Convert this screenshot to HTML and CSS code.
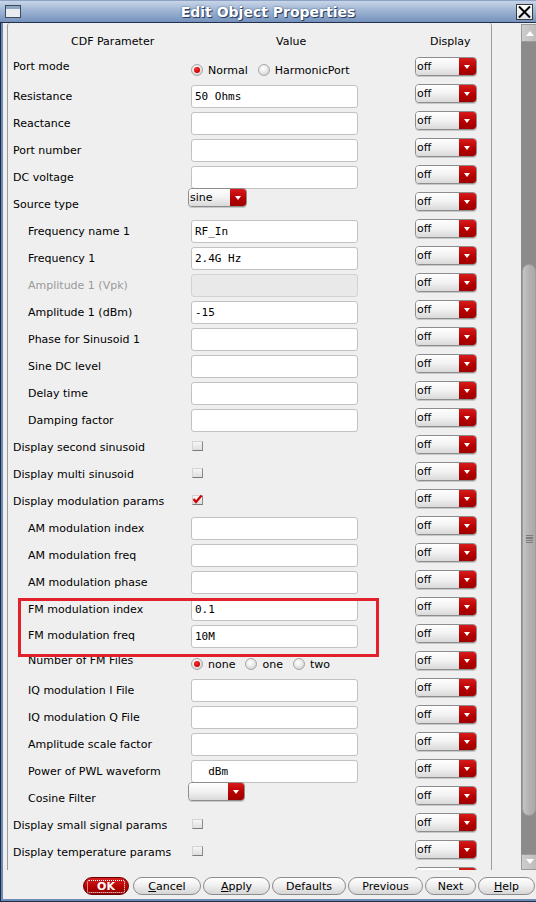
FILE: index.html
```html
<!DOCTYPE html>
<html>
<head>
<meta charset="utf-8">
<link rel="stylesheet" href="styles.css">
</head>
<body>
<div class="window">
  <div class="titlebar">
    <div class="tb-left">
      <svg class="wicon" width="16" height="13" viewBox="0 0 16 13"><rect x="0.5" y="0.5" width="15" height="12" fill="#e9ecef" stroke="#3c4a5e"/><rect x="1" y="1" width="14" height="3" fill="#8ea6c6"/></svg>
    </div>
    <div class="title">Edit Object Properties</div>
    <div class="tb-right">
      <div class="close"><svg width="15" height="14" viewBox="0 0 15 14"><path d="M2 1.5 L13 12.5 M13 1.5 L2 12.5" stroke="#000" stroke-width="2"/></svg></div>
    </div>
  </div>
  <div class="outer">
    <div class="client">
      <div class="panel">
        <div class="frame">
          <div class="header">
            <div class="h1">CDF Parameter</div>
            <div class="h2">Value</div>
            <div class="h3">Display</div>
          </div>

          <div class="row">
            <div class="lbl top">Port mode</div>
            <div class="val"><div class="radios"><span class="radio on"></span><span class="rtext">Normal</span><span class="radio"></span><span class="rtext">HarmonicPort</span></div></div>
            <div class="disp"><div class="dd"><span class="dd-t">off</span><span class="dd-b"></span></div></div>
          </div>
          <div class="row">
            <div class="lbl">Resistance</div>
            <div class="val"><div class="field">50 Ohms</div></div>
            <div class="disp"><div class="dd"><span class="dd-t">off</span><span class="dd-b"></span></div></div>
          </div>
          <div class="row">
            <div class="lbl">Reactance</div>
            <div class="val"><div class="field"></div></div>
            <div class="disp"><div class="dd"><span class="dd-t">off</span><span class="dd-b"></span></div></div>
          </div>
          <div class="row">
            <div class="lbl">Port number</div>
            <div class="val"><div class="field"></div></div>
            <div class="disp"><div class="dd"><span class="dd-t">off</span><span class="dd-b"></span></div></div>
          </div>
          <div class="row">
            <div class="lbl">DC voltage</div>
            <div class="val"><div class="field"></div></div>
            <div class="disp"><div class="dd"><span class="dd-t">off</span><span class="dd-b"></span></div></div>
          </div>
          <div class="row">
            <div class="lbl">Source type</div>
            <div class="val"><div class="dd sel sine"><span class="dd-t">sine</span><span class="dd-b"></span></div></div>
            <div class="disp"><div class="dd"><span class="dd-t">off</span><span class="dd-b"></span></div></div>
          </div>
          <div class="row">
            <div class="lbl ind">Frequency name 1</div>
            <div class="val"><div class="field">RF_In</div></div>
            <div class="disp"><div class="dd"><span class="dd-t">off</span><span class="dd-b"></span></div></div>
          </div>
          <div class="row">
            <div class="lbl ind">Frequency 1</div>
            <div class="val"><div class="field">2.4G Hz</div></div>
            <div class="disp"><div class="dd"><span class="dd-t">off</span><span class="dd-b"></span></div></div>
          </div>
          <div class="row">
            <div class="lbl ind dis">Amplitude 1 (Vpk)</div>
            <div class="val"><div class="field disabled"></div></div>
            <div class="disp"><div class="dd"><span class="dd-t">off</span><span class="dd-b"></span></div></div>
          </div>
          <div class="row">
            <div class="lbl ind">Amplitude 1 (dBm)</div>
            <div class="val"><div class="field">-15</div></div>
            <div class="disp"><div class="dd"><span class="dd-t">off</span><span class="dd-b"></span></div></div>
          </div>
          <div class="row">
            <div class="lbl ind">Phase for Sinusoid 1</div>
            <div class="val"><div class="field"></div></div>
            <div class="disp"><div class="dd"><span class="dd-t">off</span><span class="dd-b"></span></div></div>
          </div>
          <div class="row">
            <div class="lbl ind">Sine DC level</div>
            <div class="val"><div class="field"></div></div>
            <div class="disp"><div class="dd"><span class="dd-t">off</span><span class="dd-b"></span></div></div>
          </div>
          <div class="row">
            <div class="lbl ind">Delay time</div>
            <div class="val"><div class="field"></div></div>
            <div class="disp"><div class="dd"><span class="dd-t">off</span><span class="dd-b"></span></div></div>
          </div>
          <div class="row">
            <div class="lbl ind">Damping factor</div>
            <div class="val"><div class="field"></div></div>
            <div class="disp"><div class="dd"><span class="dd-t">off</span><span class="dd-b"></span></div></div>
          </div>
          <div class="row">
            <div class="lbl">Display second sinusoid</div>
            <div class="val"><span class="check"></span></div>
            <div class="disp"><div class="dd"><span class="dd-t">off</span><span class="dd-b"></span></div></div>
          </div>
          <div class="row">
            <div class="lbl">Display multi sinusoid</div>
            <div class="val"><span class="check"></span></div>
            <div class="disp"><div class="dd"><span class="dd-t">off</span><span class="dd-b"></span></div></div>
          </div>
          <div class="row">
            <div class="lbl">Display modulation params</div>
            <div class="val"><span class="check"><svg width="11" height="10" viewBox="0 0 11 10"><path d="M1.5 5 L4 8 L9.5 1.5" stroke="#d10000" stroke-width="2.2" fill="none"/></svg></span></div>
            <div class="disp"><div class="dd"><span class="dd-t">off</span><span class="dd-b"></span></div></div>
          </div>
          <div class="row">
            <div class="lbl ind">AM modulation index</div>
            <div class="val"><div class="field"></div></div>
            <div class="disp"><div class="dd"><span class="dd-t">off</span><span class="dd-b"></span></div></div>
          </div>
          <div class="row">
            <div class="lbl ind">AM modulation freq</div>
            <div class="val"><div class="field"></div></div>
            <div class="disp"><div class="dd"><span class="dd-t">off</span><span class="dd-b"></span></div></div>
          </div>
          <div class="row">
            <div class="lbl ind">AM modulation phase</div>
            <div class="val"><div class="field"></div></div>
            <div class="disp"><div class="dd"><span class="dd-t">off</span><span class="dd-b"></span></div></div>
          </div>
          <div class="hl">
            <div class="row">
              <div class="lbl ind">FM modulation index</div>
              <div class="val"><div class="field">0.1</div></div>
              <div class="disp"><div class="dd"><span class="dd-t">off</span><span class="dd-b"></span></div></div>
            </div>
            <div class="row">
              <div class="lbl ind up1">FM modulation freq</div>
              <div class="val"><div class="field">10M</div></div>
              <div class="disp"><div class="dd"><span class="dd-t">off</span><span class="dd-b"></span></div></div>
            </div>
          </div>
          <div class="row">
            <div class="lbl ind up3">Number of FM Files</div>
            <div class="val"><div class="radios"><span class="radio on"></span><span class="rtext">none</span><span class="radio"></span><span class="rtext">one</span><span class="radio"></span><span class="rtext">two</span></div></div>
            <div class="disp"><div class="dd"><span class="dd-t">off</span><span class="dd-b"></span></div></div>
          </div>
          <div class="row">
            <div class="lbl ind">IQ modulation I File</div>
            <div class="val"><div class="field"></div></div>
            <div class="disp"><div class="dd"><span class="dd-t">off</span><span class="dd-b"></span></div></div>
          </div>
          <div class="row">
            <div class="lbl ind">IQ modulation Q File</div>
            <div class="val"><div class="field"></div></div>
            <div class="disp"><div class="dd"><span class="dd-t">off</span><span class="dd-b"></span></div></div>
          </div>
          <div class="row">
            <div class="lbl ind">Amplitude scale factor</div>
            <div class="val"><div class="field"></div></div>
            <div class="disp"><div class="dd"><span class="dd-t">off</span><span class="dd-b"></span></div></div>
          </div>
          <div class="row">
            <div class="lbl ind">Power of PWL waveform</div>
            <div class="val"><div class="field">  dBm</div></div>
            <div class="disp"><div class="dd"><span class="dd-t">off</span><span class="dd-b"></span></div></div>
          </div>
          <div class="row">
            <div class="lbl ind">Cosine Filter</div>
            <div class="val"><div class="dd sel cosine"><span class="dd-t"></span><span class="dd-b"></span></div></div>
            <div class="disp"><div class="dd"><span class="dd-t">off</span><span class="dd-b"></span></div></div>
          </div>
          <div class="row">
            <div class="lbl">Display small signal params</div>
            <div class="val"><span class="check"></span></div>
            <div class="disp"><div class="dd"><span class="dd-t">off</span><span class="dd-b"></span></div></div>
          </div>
          <div class="row">
            <div class="lbl">Display temperature params</div>
            <div class="val"><span class="check"></span></div>
            <div class="disp"><div class="dd"><span class="dd-t">off</span><span class="dd-b"></span></div></div>
          </div>
          <div class="row">
            <div class="lbl"></div>
            <div class="val"></div>
            <div class="disp"><div class="dd"><span class="dd-t"></span><span class="dd-b"></span></div></div>
          </div>
        </div>
        <div class="sb">
          <div class="sb-btn up"></div>
          <div class="sb-track"><div class="thumb"><span class="grip"></span></div></div>
          <div class="sb-btn down"></div>
        </div>
      </div>
      <div class="buttons">
        <div class="btn ok"><span class="focus">OK</span></div>
        <div class="btn cancel"><u>C</u>ancel</div>
        <div class="btn apply"><u>A</u>pply</div>
        <div class="btn defaults">Defaults</div>
        <div class="btn previous">Previous</div>
        <div class="btn next">Next</div>
        <div class="btn help"><u>H</u>elp</div>
      </div>
    </div>
  </div>
</div>
</body>
</html>
```

FILE: styles.css
```css
* { box-sizing: border-box; }
html, body { margin: 0; padding: 0; }
body {
  width: 536px; height: 902px; overflow: hidden;
  font-family: "DejaVu Sans", "Noto Sans", sans-serif;
  font-size: 11px; color: #000;
  background: #efefef;
}
.window { width: 536px; height: 902px; display: flex; flex-direction: column; }

/* title bar */
.titlebar {
  height: 23px; flex: none;
  display: grid; grid-template-columns: 1fr auto 1fr; align-items: center;
  background: linear-gradient(#c8d5e8 0%, #9fb5d4 45%, #7592bd 100%);
  border-top: 1px solid #8ba2c4;
  border-bottom: 1px solid #22314c;
}
.tb-left { padding-left: 5px; display: flex; align-items: center; }
.wicon { display: block; }
.title {
  font-weight: bold; font-size: 14px; color: #fff; line-height: 20px;
  text-shadow: 1px 1px 0 #2c3e5c, 0 0 2px #3b4f70;
}
.tb-right { display: flex; justify-content: flex-end; padding-right: 3px; }
.close {
  width: 17px; height: 16px; border: 1px solid #3a3a3a;
  background: linear-gradient(#ffffff, #dfe5ee);
  display: flex; align-items: center; justify-content: center;
}
.close svg { display: block; }

/* window border */
.outer {
  flex: 1; display: flex;
  border-left: 1px solid #1f2c44; border-right: 1px solid #1f2c44; border-bottom: 1px solid #1f2c44;
}
.client {
  flex: 1; display: flex; flex-direction: column;
  border-left: 2px solid #6b8ab6; border-right: 2px solid #6b8ab6; border-bottom: 2px solid #6b8ab6;
  background: #efefef;
}
.panel { height: 847px; display: flex; flex: none; }
.frame {
  margin-left: 4px; width: 485px; height: 847px; overflow: hidden;
  border-left: 1px solid #9c9c9c; border-right: 1px solid #9c9c9c;
  border-top-left-radius: 3px; border-top-right-radius: 3px;
}

/* header */
.header { display: grid; grid-template-columns: 180px 227px 1fr; height: 30px; line-height: 14px; padding-top: 12px; }
.h1 { padding-left: 63px; }
.h2 { padding-left: 88px; }
.h3 { padding-left: 15px; }

/* rows */
.row { display: grid; grid-template-columns: 180px 227px 1fr; height: 27px; }
.lbl { padding-left: 5px; padding-top: 10px; line-height: 13px; white-space: nowrap; }
.lbl.top { padding-top: 7px; }
.lbl.ind { padding-left: 20px; }
.lbl.dis { color: #9a9a9a; }
.lbl.up1 { padding-top: 9px; }
.lbl.up3 { padding-top: 7px; }
.val { position: relative; }

.field {
  margin: 5px 0 0 3px; width: 167px; height: 23px;
  border: 1px solid #c2c2c2; border-radius: 3px; background: #fff;
  font-family: "DejaVu Sans Mono", monospace; font-size: 11px;
  line-height: 21px; padding-left: 3px; white-space: pre;
}
.field.disabled { background: #e9e9e9; border-color: #d2d2d2; }

/* dropdowns */
.dd {
  margin-top: 4px; width: 62px; height: 19px; display: flex;
  border: 1px solid #8d8d8d; border-radius: 4px; overflow: hidden;
  box-shadow: 0 1px 0 #c8c8c8;
}
.dd-t {
  flex: 1; background: linear-gradient(#ffffff 0%, #f2f2f2 50%, #d9d9d9 100%);
  line-height: 17px; padding-left: 1px;
}
.dd-b {
  width: 17px; position: relative;
  background: linear-gradient(#d81a1a, #b30000 60%, #a00000);
}
.dd-b::after {
  content: ""; position: absolute; left: 5px; top: 7px;
  border-left: 3.5px solid transparent; border-right: 3.5px solid transparent;
  border-top: 4px solid #fff;
}
.dd.sel { margin-top: 0; }
.dd.sine { width: 59px; }
.dd.sine .dd-b { width: 16px; }
.dd.sine .dd-b::after { left: 4.5px; }
.dd.cosine { width: 57px; }
.dd.cosine .dd-b { width: 16px; }
.dd.cosine .dd-b::after { left: 4.5px; }

/* radios */
.radios { display: flex; align-items: center; margin-top: 10px; margin-left: 3px; height: 13px; }
.radio {
  width: 12px; height: 12px; border-radius: 50%; flex: none;
  background: radial-gradient(circle at 40% 35%, #ffffff 0%, #e8e8e8 50%, #bdbdbd 100%);
  border: 1px solid #a8a8a8; position: relative;
}
.radio.on::after {
  content: ""; position: absolute; left: 2px; top: 2px; width: 6px; height: 6px;
  border-radius: 50%; background: radial-gradient(circle at 40% 35%, #ff3030, #cc0000 70%);
}
.rtext { margin-left: 5px; margin-right: 10px; line-height: 13px; padding-top: 2px; }

/* checkboxes */
.check {
  position: absolute; left: 4px; top: 10px; width: 11px; height: 10px;
  background: linear-gradient(#f6f6f6, #dedede);
  border-top: 1px solid #d4d4d4; border-left: 1px solid #d4d4d4;
  border-right: 1px solid #8a8a8a; border-bottom: 1px solid #7a7a7a;
}
.check svg { position: absolute; left: -1px; top: -2px; }

/* highlight */
.hl { position: relative; }
.hl::after {
  content: ""; position: absolute; left: 10px; top: 5px; width: 355px; height: 53px;
  border: 3px solid #e2212a; pointer-events: none;
}

/* scrollbar */
.sb { width: 16px; margin-left: auto; margin-top: 1px; display: flex; flex-direction: column; background: #8b8b8b; }
.sb-btn { height: 18px; background: linear-gradient(90deg, #cdcdcd, #bdbdbd); position: relative; border: 1px solid #9a9a9a; }
.sb-btn.down { height: 16px; }
.sb-btn.up::after {
  content: ""; position: absolute; left: 3.5px; top: 6px;
  border-left: 4px solid transparent; border-right: 4px solid transparent; border-bottom: 5px solid #fff;
}
.sb-btn.down::after {
  content: ""; position: absolute; left: 3.5px; top: 4px;
  border-left: 4px solid transparent; border-right: 4px solid transparent; border-top: 5px solid #fff;
}
.sb-track { flex: 1; padding-top: 222px; }
.thumb {
  margin-left: 1px; width: 14px; height: 552px;
  border-radius: 7px 7px 7px 7px;
  background: linear-gradient(90deg, #c4c4c4, #b3b3b3 50%, #a9a9a9);
  border: 1px solid #9d9d9d;
  display: flex; justify-content: center; padding-top: 270px;
}
.grip {
  width: 7px; height: 10px;
  background: repeating-linear-gradient(#7c7c7c 0 1px, transparent 1px 2.5px);
}

/* buttons */
.buttons { display: flex; padding-left: 80px; margin-top: 7px; }
.btn {
  height: 18px; border: 1px solid #8c8c8c; border-radius: 9px;
  background: linear-gradient(#ffffff 0%, #f0f0f0 45%, #d6d6d6 100%);
  text-align: center; line-height: 16px; padding-top: 1px; margin-right: 2px;
}
.btn u { text-decoration: underline; text-underline-offset: 1px; }
.ok {
  width: 46px; margin-right: 4px; color: #fff; font-weight: bold;
  background: linear-gradient(#d82020, #b00000 60%, #950000);
  border-color: #6b0000; padding: 2px 3px 0;
}
.ok .focus { display: block; border: 1px dotted #fff; line-height: 11px; height: 13px; border-radius: 2px; }
.cancel { width: 68px; }
.apply { width: 67px; }
.defaults { width: 74px; }
.previous { width: 75px; }
.next { width: 51px; }
.help { width: 57px; }
```
